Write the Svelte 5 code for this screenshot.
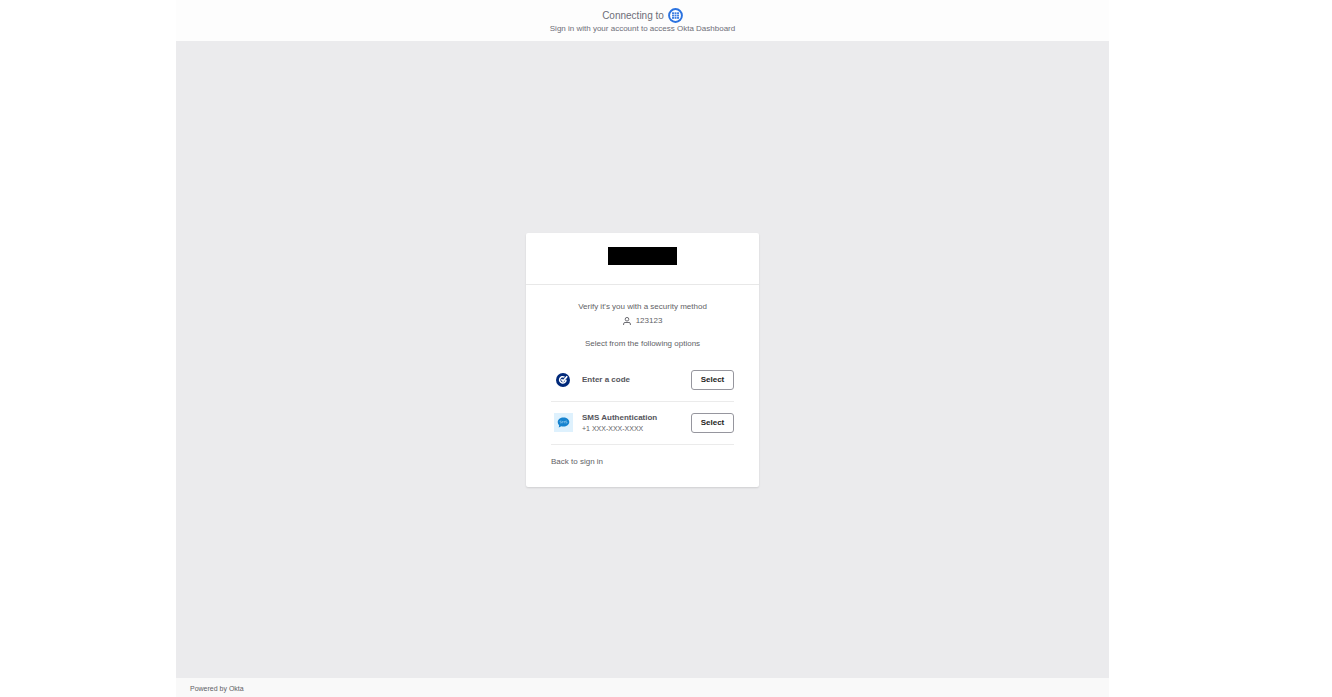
<script lang="ts">
  type Method = { id: string; label: string; detail?: string };

  const methods: Method[] = [
    { id: 'code', label: 'Enter a code' },
    { id: 'sms', label: 'SMS Authentication', detail: '+1 XXX-XXX-XXXX' }
  ];

  let selected = $state('');
</script>

<div class="page">
  <header class="banner">
    <h1 class="connecting">
      Connecting to
      <svg class="app-icon" viewBox="0 0 28 28" aria-hidden="true">
        <circle cx="14" cy="14" r="12" fill="#fff" stroke="#2b73e0" stroke-width="3.6" />
        <g fill="#3f7fe3">
          {#each [7.5, 12.2, 16.9] as x}
            {#each [8, 12.4, 16.8] as y}
              <rect {x} {y} width="3.7" height="3.4" />
            {/each}
          {/each}
        </g>
      </svg>
    </h1>
    <p class="hint">Sign in with your account to access Okta Dashboard</p>
  </header>

  <main>
    <section class="card">
      <div class="card-head">
        <div class="logo"></div>
      </div>
      <div class="card-body">
        <h2>Verify it's you with a security method</h2>
        <div class="user">
          <svg viewBox="0 0 16 16" fill="none" stroke="#5c5c63" stroke-width="1.8" aria-hidden="true">
            <circle cx="8" cy="4.5" r="3.6" />
            <path d="M1.2 16v-2.2c0-1.800 1-2.800 2.800-2.800h8c1.800 0 2.800 1 2.800 2.800V16" />
          </svg>
          <span>123123</span>
        </div>
        <p class="prompt">Select from the following options</p>

        <ul>
          {#each methods as method}
            <li>
              <div class="method-icon">
                {#if method.id === 'code'}
                  <svg class="verify" viewBox="0 0 28 28" aria-hidden="true">
                    <circle cx="14" cy="14" r="14" fill="#00297a" />
                    <path
                      d="M17 8.300A6.400 6.400 0 1 0 20 13.500"
                      fill="none"
                      stroke="#fff"
                      stroke-width="3"
                    />
                    <path
                      d="M10.800 12.500l3.400 3.700L22.500 6.500"
                      fill="none"
                      stroke="#fff"
                      stroke-width="3.4"
                    />
                  </svg>
                {:else}
                  <svg class="sms" viewBox="0 0 38 38" aria-hidden="true">
                    <rect width="38" height="38" fill="#def1fd" />
                    <path
                      d="M19 9c6.400 0 11.500 4 11.500 9S25.400 27 19 27c-1.500 0-3-.2-4.300-.6L9.500 29l.8-4.700C8.500 22.700 7.500 20.400 7.500 18c0-5 5.100-9 11.500-9z"
                      fill="#1683cf"
                    />
                    <g fill="none" stroke="#8cc6ed" stroke-width="1.1">
                      <path d="M15 16h-3v2h3v2h-3" />
                      <path d="M17 20.500V16l2 2.500 2-2.500v4.500" />
                      <path d="M26 16h-3v2h3v2h-3" />
                    </g>
                  </svg>
                {/if}
              </div>
              <div class="method-text">
                <h3>{method.label}</h3>
                {#if method.detail}
                  <p>{method.detail}</p>
                {/if}
              </div>
              <button
                type="button"
                aria-label="Select {method.label}"
                onclick={() => (selected = method.id)}>Select</button
              >
            </li>
          {/each}
        </ul>

        <a class="back" href="#signin">Back to sign in</a>
      </div>
    </section>
  </main>

  <footer>
    <a href="#okta">Powered by Okta</a>
  </footer>
</div>

<style>
  :global(body) {
    margin: 0;
    background: #fff;
    font-family: 'Liberation Sans', Arial, sans-serif;
  }

  .page {
    display: flex;
    flex-direction: column;
    min-height: 100vh;
    margin: 0 223px 0 176px;
    color: #5f5f66;
    font-size: 8px;
    line-height: 12px;
  }

  h1,
  h2,
  h3,
  p,
  ul {
    margin: 0;
    padding: 0;
  }

  a {
    color: inherit;
    text-decoration: none;
  }

  .banner {
    padding: 8px 0 6px;
    background: #fdfdfd;
    text-align: center;
  }

  .connecting {
    display: flex;
    justify-content: center;
    align-items: center;
    gap: 4px;
    font-size: 10px;
    font-weight: 400;
    line-height: 15px;
    color: #6e6e78;
  }

  .app-icon {
    width: 15px;
    height: 15px;
  }

  .hint {
    color: #6e6e78;
  }

  main {
    flex: 1;
    display: flex;
    justify-content: center;
    align-items: center;
    background: #ebebed;
  }

  .card {
    width: 233px;
    background: #fff;
    border-radius: 2px;
    box-shadow: 0 1px 2px rgba(0, 0, 0, 0.12);
  }

  .card-head {
    display: flex;
    justify-content: center;
    padding: 14px 0 19px;
    border-bottom: 1px solid #e8e8e8;
  }

  .logo {
    width: 69px;
    height: 18px;
    background: #000;
  }

  .card-body {
    padding: 16px 25px 19px;
  }

  h2 {
    font-size: 8px;
    font-weight: 400;
    text-align: center;
  }

  .user {
    display: flex;
    justify-content: center;
    align-items: center;
    gap: 5px;
    margin-top: 2px;
  }

  .user svg {
    width: 8px;
    height: 8px;
  }

  .prompt {
    margin-top: 11px;
    text-align: center;
  }

  ul {
    margin-top: 9px;
    list-style: none;
  }

  li {
    display: flex;
    align-items: center;
    height: 42px;
    border-bottom: 1px solid #ebebeb;
  }

  .method-icon {
    display: flex;
    justify-content: center;
    width: 24px;
    margin-right: 7px;
  }

  .verify {
    width: 14px;
    height: 14px;
  }

  .sms {
    width: 19px;
    height: 19px;
  }

  .method-text {
    flex: 1;
    line-height: 11px;
  }

  .method-text p {
    font-size: 7px;
  }

  h3 {
    font-size: 8px;
    font-weight: 700;
    color: #55555c;
  }

  button {
    width: 43px;
    height: 20px;
    padding: 0;
    border: 1px solid #96969e;
    border-radius: 3px;
    background: #fff;
    color: #1d1d21;
    font-family: inherit;
    font-size: 8px;
    font-weight: 700;
    cursor: pointer;
  }

  .back {
    display: block;
    margin-top: 11px;
  }

  footer {
    padding: 5px 14px 2px;
    background: #f9f9f9;
    font-size: 7px;
  }

  footer a {
    display: block;
  }
</style>
